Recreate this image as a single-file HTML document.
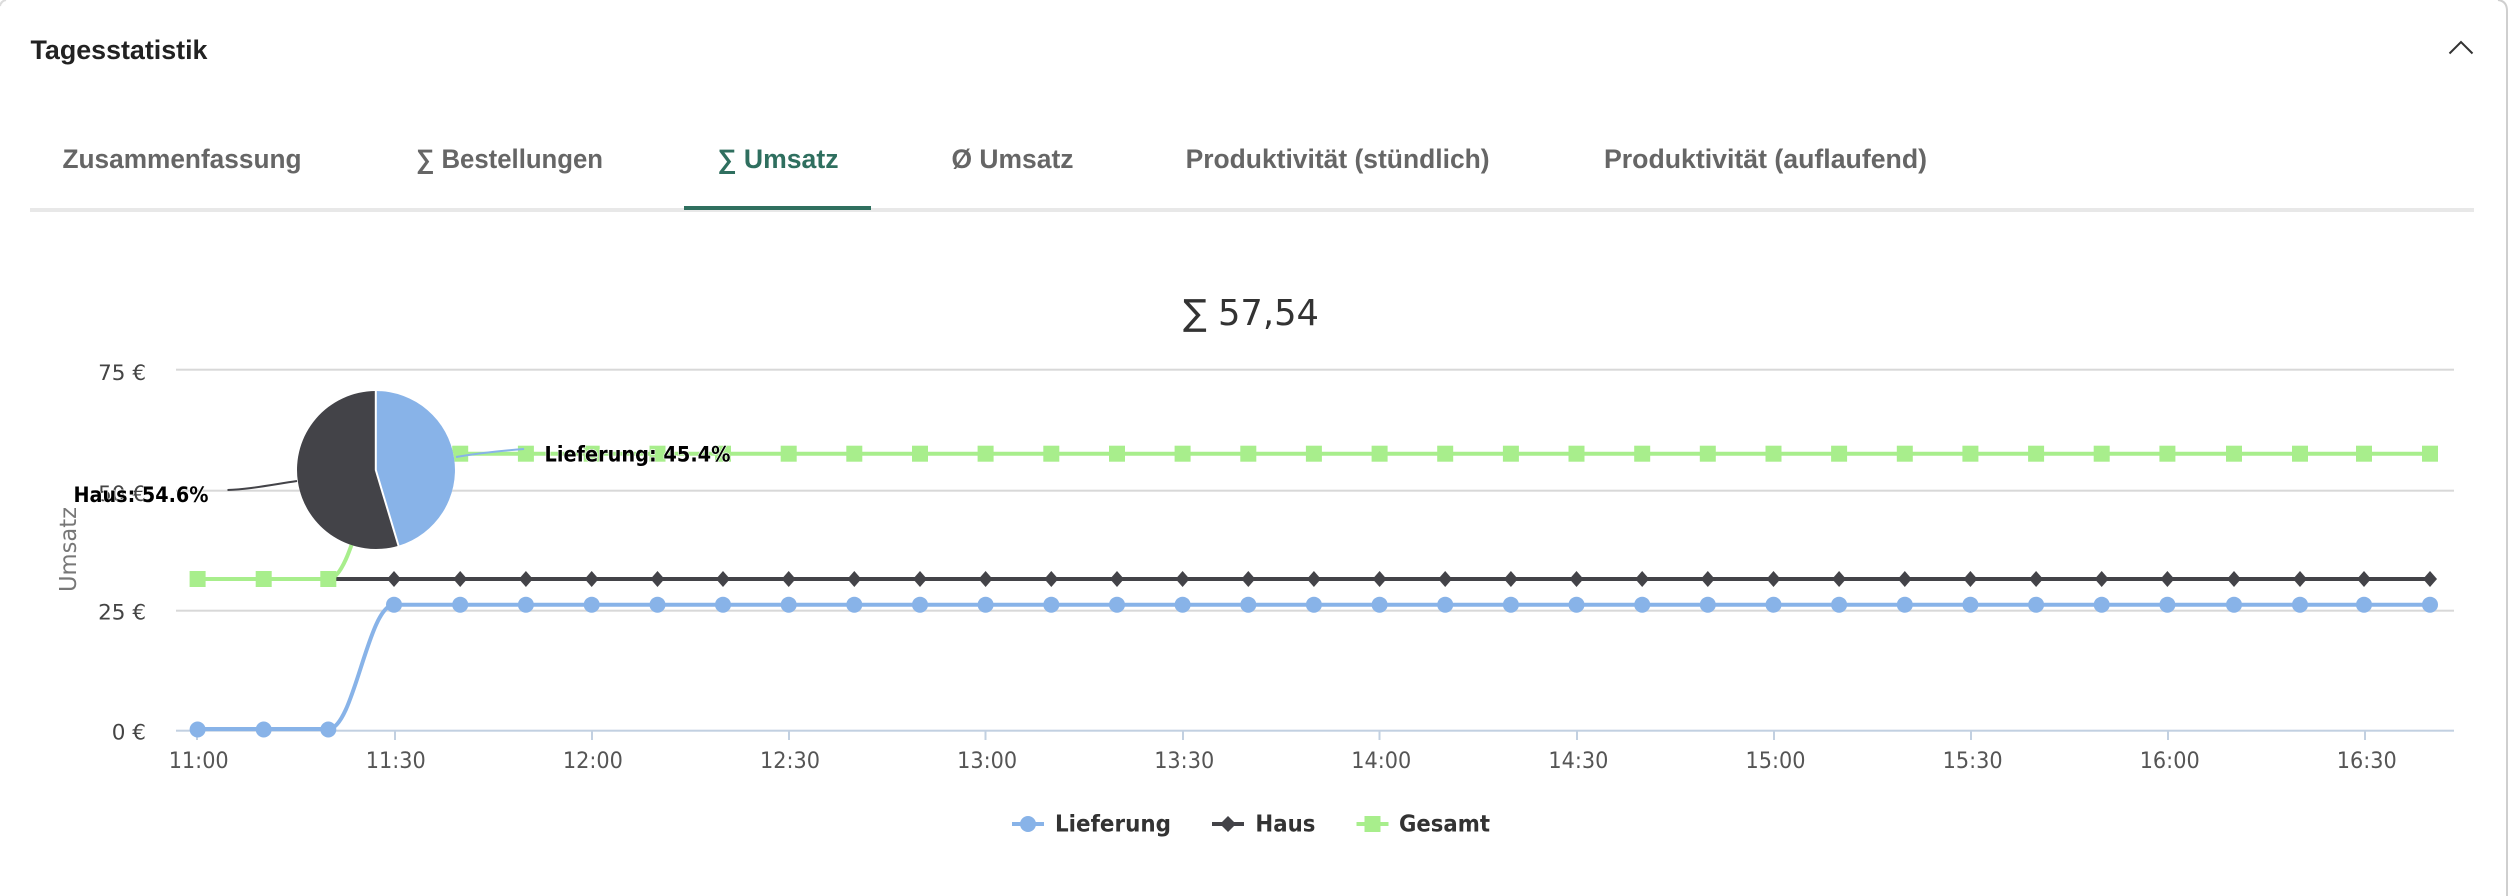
<!DOCTYPE html>
<html lang="de">
<head>
<meta charset="utf-8">
<title>Tagesstatistik</title>
<style>
html,body{margin:0;padding:0;background:#fff;width:2508px;height:896px;overflow:hidden}
svg{display:block;position:absolute;left:0;top:0}
.h{font-family:"Liberation Sans",sans-serif;font-weight:700}
.c{font-family:"DejaVu Sans",sans-serif}
.tab{font-size:26.6px;fill:#666}
.yl{font-size:21.5px;fill:#444;text-anchor:end}
.xl{font-size:22px;fill:#555;text-anchor:middle}
.lg{font-size:23.5px;font-weight:700;fill:#333}
.dl{font-size:21px;font-weight:700;fill:#000;stroke:#fff;stroke-width:1.2px;paint-order:stroke fill;stroke-linejoin:round}
</style>
</head>
<body>
<svg width="2508" height="896" viewBox="0 0 2508 896" xmlns="http://www.w3.org/2000/svg">
<defs>
<g id="m">
<circle cx="0" cy="604.7" r="8" fill="#88b3e8"/>
<path d="M0 571 L7 579 L0 587 L-7 579Z" fill="#434348"/>
<rect x="-8" y="445.7" width="16" height="16" fill="#a8ee8c"/>
</g>
</defs>

<!-- card edges -->
<path d="M2498 0 Q2507 1 2507 11 V896" fill="none" stroke="#cfcfcf" stroke-width="2"/>
<path d="M0 6 Q1 1 6 0" fill="none" stroke="#dcdcdc" stroke-width="2"/>

<!-- header -->
<text class="h" x="30.5" y="59" font-size="26.6" fill="#222" textLength="177" lengthAdjust="spacingAndGlyphs">Tagesstatistik</text>
<path d="M2449.5 53.5 L2461 42 L2472.5 53.5" fill="none" stroke="#333" stroke-width="2"/>

<!-- tabs -->
<text class="h tab" x="62.5" y="168" textLength="239" lengthAdjust="spacingAndGlyphs">Zusammenfassung</text>
<text class="h tab" x="416" y="168" textLength="187" lengthAdjust="spacingAndGlyphs">∑ Bestellungen</text>
<text class="h tab" x="717.5" y="168" textLength="121" lengthAdjust="spacingAndGlyphs" style="fill:#2f6f5f">∑ Umsatz</text>
<text class="h tab" x="951.5" y="168" textLength="122" lengthAdjust="spacingAndGlyphs">Ø Umsatz</text>
<text class="h tab" x="1185.6" y="168" textLength="304" lengthAdjust="spacingAndGlyphs">Produktivität (stündlich)</text>
<text class="h tab" x="1604" y="168" textLength="323" lengthAdjust="spacingAndGlyphs">Produktivität (auflaufend)</text>
<rect x="30" y="208" width="2444" height="4" fill="#e8e8e8"/>
<rect x="684" y="206" width="187" height="4" fill="#2f6f5f"/>

<!-- chart title -->
<text class="c" x="1183" y="325" font-size="36" fill="#333" textLength="136" lengthAdjust="spacingAndGlyphs">∑ 57,54</text>

<!-- grid -->
<g fill="#d8d8d8">
<rect x="176" y="368.7" width="2278" height="2"/>
<rect x="176" y="489.7" width="2278" height="2"/>
<rect x="176" y="609.7" width="2278" height="2"/>
</g>
<rect x="176" y="729.7" width="2278" height="2" fill="#c2d0e1"/>
<g fill="#c2d0e1">
<rect x="196" y="731" width="2" height="9"/>
<rect x="394" y="731" width="2" height="9"/>
<rect x="591" y="731" width="2" height="9"/>
<rect x="788" y="731" width="2" height="9"/>
<rect x="984.5" y="731" width="2" height="9"/>
<rect x="1182" y="731" width="2" height="9"/>
<rect x="1378.5" y="731" width="2" height="9"/>
<rect x="1576" y="731" width="2" height="9"/>
<rect x="1773" y="731" width="2" height="9"/>
<rect x="1970" y="731" width="2" height="9"/>
<rect x="2167" y="731" width="2" height="9"/>
<rect x="2364" y="731" width="2" height="9"/>
</g>

<!-- y axis -->
<text class="c yl" x="146" y="380">75 €</text>
<text class="c yl" x="146" y="501">50 €</text>
<text class="c yl" x="146" y="619.5">25 €</text>
<text class="c yl" x="146" y="739.7">0 €</text>
<text class="c" x="0" y="0" font-size="23" fill="#777" text-anchor="middle" textLength="85" lengthAdjust="spacingAndGlyphs" transform="translate(76 549.5) rotate(-90)">Umsatz</text>

<!-- x axis -->
<text class="c xl" x="198.7" y="768" textLength="60" lengthAdjust="spacingAndGlyphs">11:00</text>
<text class="c xl" x="395.8" y="768" textLength="60" lengthAdjust="spacingAndGlyphs">11:30</text>
<text class="c xl" x="592.9" y="768" textLength="60" lengthAdjust="spacingAndGlyphs">12:00</text>
<text class="c xl" x="790" y="768" textLength="60" lengthAdjust="spacingAndGlyphs">12:30</text>
<text class="c xl" x="987.1" y="768" textLength="60" lengthAdjust="spacingAndGlyphs">13:00</text>
<text class="c xl" x="1184.2" y="768" textLength="60" lengthAdjust="spacingAndGlyphs">13:30</text>
<text class="c xl" x="1381.3" y="768" textLength="60" lengthAdjust="spacingAndGlyphs">14:00</text>
<text class="c xl" x="1578.4" y="768" textLength="60" lengthAdjust="spacingAndGlyphs">14:30</text>
<text class="c xl" x="1775.5" y="768" textLength="60" lengthAdjust="spacingAndGlyphs">15:00</text>
<text class="c xl" x="1972.6" y="768" textLength="60" lengthAdjust="spacingAndGlyphs">15:30</text>
<text class="c xl" x="2169.7" y="768" textLength="60" lengthAdjust="spacingAndGlyphs">16:00</text>
<text class="c xl" x="2366.8" y="768" textLength="60" lengthAdjust="spacingAndGlyphs">16:30</text>

<!-- series lines -->
<path d="M197.6 729 H328.5 C354 729 368 604.7 394 604.7 H2430" fill="none" stroke="#88b3e8" stroke-width="4"/>
<path d="M197.6 579 H2430" fill="none" stroke="#434348" stroke-width="4"/>
<path d="M197.6 579 H328.5 C354 579 368 453.7 394 453.7 H2430" fill="none" stroke="#a8ee8c" stroke-width="4"/>

<!-- markers -->
<circle cx="197.6" cy="729.5" r="8" fill="#88b3e8"/>
<circle cx="263.7" cy="729.5" r="8" fill="#88b3e8"/>
<circle cx="328.3" cy="729.5" r="8" fill="#88b3e8"/>
<rect x="189.6" y="571" width="16" height="16" fill="#a8ee8c"/>
<rect x="255.7" y="571" width="16" height="16" fill="#a8ee8c"/>
<rect x="320.3" y="571" width="16" height="16" fill="#a8ee8c"/>
<use href="#m" x="394"/><use href="#m" x="460.2"/><use href="#m" x="525.9"/><use href="#m" x="591.7"/><use href="#m" x="657.5"/><use href="#m" x="723"/><use href="#m" x="788.7"/><use href="#m" x="854.3"/><use href="#m" x="920"/><use href="#m" x="985.6"/><use href="#m" x="1051.3"/><use href="#m" x="1117"/><use href="#m" x="1182.6"/><use href="#m" x="1248.3"/><use href="#m" x="1313.9"/><use href="#m" x="1379.6"/><use href="#m" x="1445.2"/><use href="#m" x="1510.9"/><use href="#m" x="1576.5"/><use href="#m" x="1642.2"/><use href="#m" x="1707.8"/><use href="#m" x="1773.5"/><use href="#m" x="1839.1"/><use href="#m" x="1904.8"/><use href="#m" x="1970.4"/><use href="#m" x="2036.1"/><use href="#m" x="2101.7"/><use href="#m" x="2167.4"/><use href="#m" x="2234"/><use href="#m" x="2300"/><use href="#m" x="2364"/><use href="#m" x="2430"/>

<!-- legend -->
<rect x="1012" y="822" width="32" height="4" fill="#88b3e8"/>
<circle cx="1028" cy="824" r="8" fill="#88b3e8"/>
<text class="c lg" x="1055" y="831.7" textLength="116" lengthAdjust="spacingAndGlyphs">Lieferung</text>
<rect x="1212" y="822" width="32" height="4" fill="#434348"/>
<path d="M1228 816 L1236 824 L1228 832 L1220 824Z" fill="#434348"/>
<text class="c lg" x="1255.4" y="831.7" textLength="60" lengthAdjust="spacingAndGlyphs">Haus</text>
<rect x="1356.5" y="822" width="32" height="4" fill="#a8ee8c"/>
<rect x="1364.5" y="816" width="16" height="16" fill="#a8ee8c"/>
<text class="c lg" x="1399" y="831.7" textLength="91" lengthAdjust="spacingAndGlyphs">Gesamt</text>

<!-- pie -->
<circle cx="376" cy="470" r="79" fill="#fff"/>
<path d="M375.5 470 L398.6 545.7 A79 79 0 1 1 375.5 391 Z" fill="#434348"/>
<path d="M376 391 A79 79 0 0 1 398.9 545.6 L376 470 Z" fill="#88b3e8"/>
<path d="M375.8 390.5 V470 L398.6 546" fill="none" stroke="#fff" stroke-width="2"/>

<!-- connectors -->
<path d="M456 457 C480 453 505 450.5 524 449" fill="none" stroke="#88b3e8" stroke-width="2"/>
<path d="M297 481 C270 485 248 489.5 227.5 490" fill="none" stroke="#434348" stroke-width="2"/>

<!-- data labels -->
<text class="c dl" x="544.5" y="461.7" textLength="186" lengthAdjust="spacingAndGlyphs">Lieferung: 45.4%</text>
<text class="c dl" x="73.5" y="502" textLength="135" lengthAdjust="spacingAndGlyphs">Haus: 54.6%</text>
</svg>
</body>
</html>
